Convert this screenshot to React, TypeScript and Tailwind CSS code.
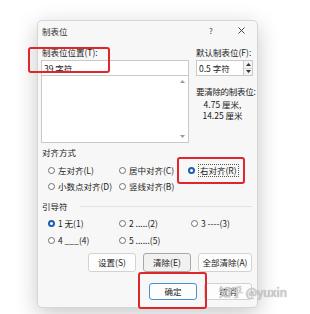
import React from "react";

const Radio: React.FC<{ label: string; w?: string; checked?: boolean; focus?: boolean }> = ({
  label,
  w = "",
  checked,
  focus,
}) => (
  <div className={`flex items-center h-[12px] gap-[3px] shrink-0 ${w}`}>
    {checked ? (
      <span className="w-[7px] h-[7px] rounded-full border-[2px] border-[#1b5fae] bg-white shrink-0" />
    ) : (
      <span className="w-[7px] h-[7px] rounded-full border border-[#6e6e6e] bg-white shrink-0" />
    )}
    <span
      className={
        focus
          ? "leading-[11px] px-px border border-dotted border-[#555] whitespace-nowrap"
          : "leading-[12px] whitespace-nowrap"
      }
    >
      {label}
    </span>
  </div>
);

const Btn: React.FC<{ label: string; w: string; variant?: "focus" | "default" }> = ({
  label,
  w,
  variant,
}) => {
  let cls = "bg-[#fdfdfd] border-[#d2d2d2]";
  if (variant === "focus") cls = "bg-[#f1f1f1] border-[#a8a8a8]";
  if (variant === "default") cls = "bg-[#fdfdfd] border-[#4a8fd4]";
  return (
    <div
      className={`${w} h-full flex items-center justify-center border rounded-[3px] whitespace-nowrap ${cls}`}
    >
      {label}
    </div>
  );
};

const Tri: React.FC<{ up?: boolean; color?: string }> = ({ up, color = "#7a7a7a" }) => (
  <svg width="5" height="3" viewBox="0 0 5 3">
    <path d={up ? "M0 3 L2.5 0 L5 3 Z" : "M0 0 L2.5 3 L5 0 Z"} fill={color} />
  </svg>
);

export default function App() {
  return (
    <div className="relative w-[310px] h-[314px] overflow-hidden bg-white font-['Noto_Sans_CJK_SC','Noto_Sans',sans-serif] text-[8.5px] text-[#1b1b1b]">
      {/* Dialog */}
      <div className="ml-[37px] mt-[20px] w-[221px] h-[288px] bg-[#f7f7f7] rounded-[5px] border border-[#d6d6d6] shadow-[0_6px_22px_rgba(0,0,0,0.22)] flex flex-col">
        {/* Title bar */}
        <div className="h-[19px] flex items-center pl-[4px]">
          <span className="text-[#333] leading-[12px]">制表位</span>
          <span className="ml-auto w-[10px] text-center text-[#444] text-[8px]">?</span>
          <span className="ml-[22px] mr-[12px] flex items-center">
            <svg width="7" height="7" viewBox="0 0 7 7">
              <path d="M0.5 0.5 L6.5 6.5 M6.5 0.5 L0.5 6.5" stroke="#333" strokeWidth="0.9" />
            </svg>
          </span>
        </div>

        <div className="flex-1 pl-[3px] pr-[5px] pt-[6px] flex flex-col">
          {/* Tab stops */}
          <div className="flex gap-[7px]">
            <div className="w-[148px] shrink-0 flex flex-col">
              <div className="leading-[12px] pl-px whitespace-nowrap">制表位位置(T):</div>
              <div className="mt-[2px] h-[16px] bg-white border border-[#c9c9c9] flex items-center pl-[2px]">
                39 字符
              </div>
              <div className="h-[67px] bg-white border border-t-0 border-[#c9c9c9] flex flex-col items-end justify-between pr-[3px] py-[4px]">
                <Tri up color="#9a9a9a" />
                <Tri color="#9a9a9a" />
              </div>
            </div>
            <div className="w-[57px] shrink-0 flex flex-col">
              <div className="leading-[12px] whitespace-nowrap">默认制表位(F):</div>
              <div className="mt-[2px] h-[16px] flex">
                <div className="flex-1 bg-white border border-[#c9c9c9] flex items-center pl-[2px] whitespace-nowrap">
                  0.5 字符
                </div>
                <div className="w-[9px] flex flex-col border border-l-0 border-[#c9c9c9] bg-[#f3f3f3]">
                  <div className="flex-1 flex items-center justify-center border-b border-[#d8d8d8]">
                    <Tri up color="#333" />
                  </div>
                  <div className="flex-1 flex items-center justify-center">
                    <Tri color="#333" />
                  </div>
                </div>
              </div>
              <div className="mt-[9px] leading-[12px] whitespace-nowrap tracking-[-0.3px]">要清除的制表位:</div>
              <div className="mt-[2px] text-center leading-[11px] pr-[4px] whitespace-nowrap">
                <div>4.75 厘米,</div>
                <div>14.25 厘米</div>
              </div>
            </div>
          </div>

          {/* Alignment */}
          <div className="mt-[3px] leading-[12px] pl-px">对齐方式</div>
          <div className="mt-[6px] pl-[7px] flex flex-col gap-[4px]">
            <div className="flex">
              <Radio label="左对齐(L)" w="w-[71px]" />
              <Radio label="居中对齐(C)" w="w-[69px]" />
              <Radio label="右对齐(R)" checked focus />
            </div>
            <div className="flex">
              <Radio label="小数点对齐(D)" w="w-[71px]" />
              <Radio label="竖线对齐(B)" />
            </div>
          </div>

          {/* Leader */}
          <div className="mt-[8px] flex items-center">
            <span className="leading-[12px] pl-px">引导符</span>
            <span className="ml-[12px] flex-1 h-px bg-[#e2e2e2]" />
          </div>
          <div className="mt-[5px] pl-[7px] flex flex-col gap-[5px]">
            <div className="flex">
              <Radio label="1 无(1)" w="w-[71px]" checked />
              <Radio label="2 .....(2)" w="w-[72px]" />
              <Radio label="3 ----(3)" />
            </div>
            <div className="flex">
              <Radio label="4 ___(4)" w="w-[71px]" />
              <Radio label="5 ......(5)" />
            </div>
          </div>

          {/* Action buttons */}
          <div className="mt-[7px] h-[19px] flex justify-end gap-[7px]">
            <Btn label="设置(S)" w="w-[48px]" />
            <Btn label="清除(E)" w="w-[48px]" variant="focus" />
            <Btn label="全部清除(A)" w="w-[54px]" />
          </div>

          <div className="mt-[11px] h-[17px] flex justify-end gap-[7px]">
            <Btn label="确定" w="w-[48px]" variant="default" />
            <Btn label="取消" w="w-[48px]" />
          </div>
        </div>
      </div>

      {/* Annotation boxes */}
      <div className="absolute left-[28px] top-[47px] w-[82px] h-[26px] border-2 border-[#e0262b] rounded-[3px]" />
      <div className="absolute left-[177px] top-[157px] w-[68px] h-[27px] border-2 border-[#e0262b] rounded-[3px]" />
      <div className="absolute left-[138px] top-[272px] w-[69px] h-[37px] border-2 border-[#e0262b] rounded-[3px]" />

      {/* Watermark */}
      <div className="absolute left-[219px] top-[284px] text-[12px] leading-[16px] text-[#d4d4d4] [text-shadow:0_0_1px_#7a7a7a] whitespace-nowrap">
        知乎 @yuxin
      </div>
    </div>
  );
}
